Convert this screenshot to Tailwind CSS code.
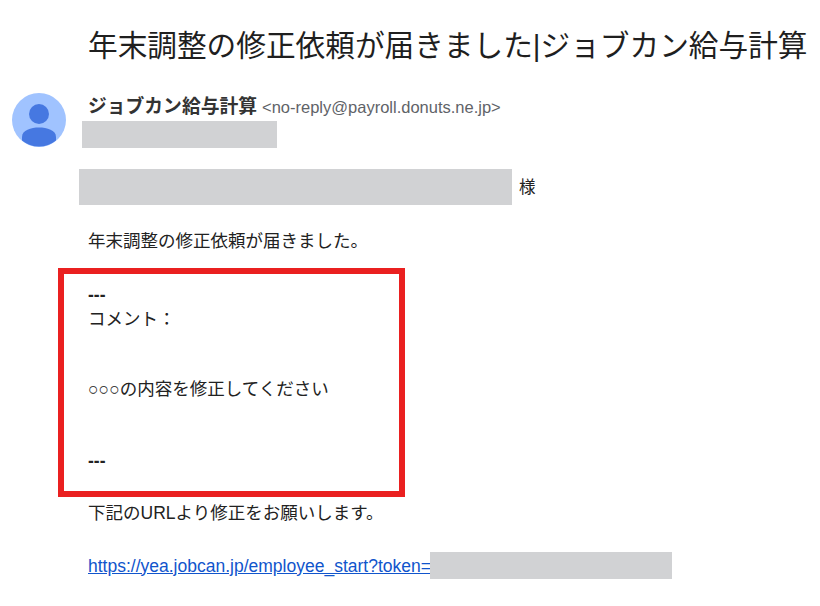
<!doctype html>
<html lang="ja">
<head>
<meta charset="utf-8">
<script src="https://cdn.jsdelivr.net/npm/@tailwindcss/browser@4"></script>
</head>
<body class="bg-white">
<div class="relative w-[820px] h-[606px] overflow-hidden bg-white font-['Liberation_Sans','Noto_Sans_CJK_JP',sans-serif] text-[#222222]">
  <h1 class="pl-[88px] pt-[26px] h-[93px] text-[29.67px] leading-[40px] font-normal whitespace-nowrap text-[#1f1f1f]">年末調整の修正依頼が届きました|ジョブカン給与計算</h1>
  <div class="flex pl-[12px]">
    <svg class="w-[54px] h-[54px] shrink-0" viewBox="0 0 54 54" aria-hidden="true">
      <circle cx="27" cy="27" r="27" fill="#a0c3ff"/>
      <circle cx="27" cy="21" r="10" fill="#4678e1"/>
      <path d="M10 47.5 V44 C10 37 19 34.500 27 34.500 C35 34.500 44 37 44 44 V47.500 A27 27 0 0 1 10 47.500 Z" fill="#4678e1"/>
    </svg>
    <div class="pl-[22px] min-w-0">
      <div class="h-[28px] pt-[1px] flex items-baseline whitespace-nowrap">
        <span class="text-[18.8px] leading-[26px] font-bold text-[#333333]">ジョブカン給与計算</span>
        <span class="ml-[5px] text-[16.5px] leading-[26px] text-[#5f6368]">&lt;no-reply@payroll.donuts.ne.jp&gt;</span>
      </div>
      <div class="-ml-[6px] w-[195px] h-[27px] bg-[#d1d2d4]"></div>
    </div>
  </div>
  <div class="pl-[79px] mt-[21px] flex items-center h-[36px]">
    <div class="w-[433px] h-[36px] bg-[#d1d2d4]"></div>
    <span class="ml-[7px] text-[16.5px] mt-[1px]">様</span>
  </div>
  <div class="pl-[88px] mt-[24px] text-[17.5px] leading-[24px] text-[#222222]">
    <p class="h-[54px]">年末調整の修正依頼が届きました。</p>
    <p class="h-[24px] font-bold">---</p>
    <p class="h-[70px]">コメント：</p>
    <p class="h-[72px]">○○○の内容を修正してください</p>
    <p class="h-[52px] font-bold">---</p>
    <p class="h-[51px]">下記のURLより修正をお願いします。</p>
    <div class="flex items-center h-[27px]">
      <a href="#" class="text-[#1155cc] underline whitespace-nowrap">https://yea.jobcan.jp/employee_start?token=</a>
      <div class="-ml-[1px] w-[242px] h-[27px] bg-[#d1d2d4]"></div>
    </div>
  </div>
  <div class="absolute left-[58px] top-[268px] w-[347px] h-[229px] border-[6px] border-[#ea2020]"></div>
</div>
</body>
</html>
